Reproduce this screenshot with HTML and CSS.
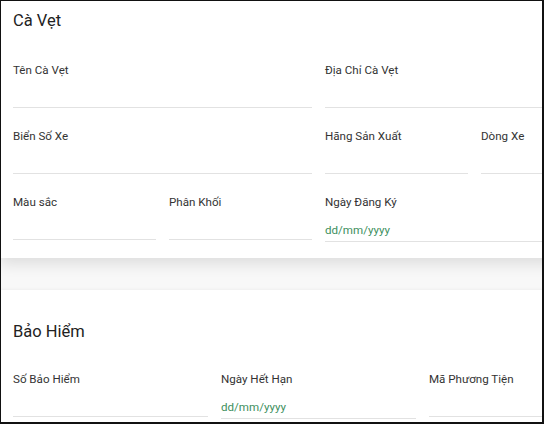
FILE: index.html
```html
<!DOCTYPE html>
<html lang="vi">
<head>
<meta charset="utf-8">
<title>Cà Vẹt</title>
<link rel="stylesheet" href="styles.css">
</head>
<body>
<div class="page">
  <section class="card card-first">
    <h2 class="card-title">Cà Vẹt</h2>
    <div class="grid">
      <div class="field span-6"><label>Tên Cà Vẹt</label><div class="input"></div></div>
      <div class="field span-6"><label>Địa Chỉ Cà Vẹt</label><div class="input"></div></div>
      <div class="field span-6"><label>Biển Số Xe</label><div class="input"></div></div>
      <div class="field span-3"><label>Hãng Sản Xuất</label><div class="input"></div></div>
      <div class="field span-3"><label>Dòng Xe</label><div class="input"></div></div>
      <div class="field span-3"><label>Màu sắc</label><div class="input"></div></div>
      <div class="field span-3"><label>Phân Khối</label><div class="input"></div></div>
      <div class="field span-6"><label>Ngày Đăng Ký</label><div class="input date">dd/mm/yyyy</div></div>
    </div>
  </section>
  <section class="card card-second">
    <h2 class="card-title">Bảo Hiểm</h2>
    <div class="grid">
      <div class="field span-4"><label>Số Bảo Hiểm</label><div class="input"></div></div>
      <div class="field span-4"><label>Ngày Hết Hạn</label><div class="input date">dd/mm/yyyy</div></div>
      <div class="field span-4"><label>Mã Phương Tiện</label><div class="input"></div></div>
    </div>
  </section>
</div>
<div class="frame"></div>
</body>
</html>
```
FILE: styles.css
```css
html, body {
  margin: 0;
  padding: 0;
  width: 544px;
  height: 424px;
  overflow: hidden;
  background: #f8f8f8;
  font-family: Roboto, "Noto Sans", "Liberation Sans", sans-serif;
  color: #333;
}
.page {
  width: 637px;
  margin-top: -21px;
}
.card {
  background: #fff;
  padding: 28px 13px 17px;
}
.card-first {
  padding-bottom: 16px;
  box-shadow: 0 6px 14px rgba(0, 0, 0, 0.11);
  position: relative;
  z-index: 1;
}
.card-second {
  margin-top: 32px;
  box-shadow: 0 -1px 3px rgba(0, 0, 0, 0.04);
}
.card-title {
  margin: 0;
  font-size: 16.5px;
  font-weight: 400;
  line-height: 28px;
  color: #222;
}
.grid {
  margin-top: 27px;
  display: grid;
  grid-template-columns: repeat(12, 1fr);
  column-gap: 13px;
  row-gap: 20px;
}
.card-second .grid {
  margin-top: 25px;
}
.span-3 { grid-column: span 3; }
.span-4 { grid-column: span 4; }
.span-6 { grid-column: span 6; }
.field label {
  display: block;
  font-size: 11.6px;
  line-height: 16px;
  color: #333;
}
.input {
  box-sizing: border-box;
  height: 30px;
  border-bottom: 1px solid #e2e2e2;
}
.input.date {
  height: 32px;
  padding-top: 12px;
  font-size: 11.6px;
  line-height: 16px;
  color: #3e9060;
}
.frame {
  position: fixed;
  inset: 0;
  border-top: 1px solid #111;
  border-left: 1px solid #111;
  border-right: 2px solid #111;
  border-bottom: 2px solid #111;
  pointer-events: none;
  z-index: 5;
}
```
